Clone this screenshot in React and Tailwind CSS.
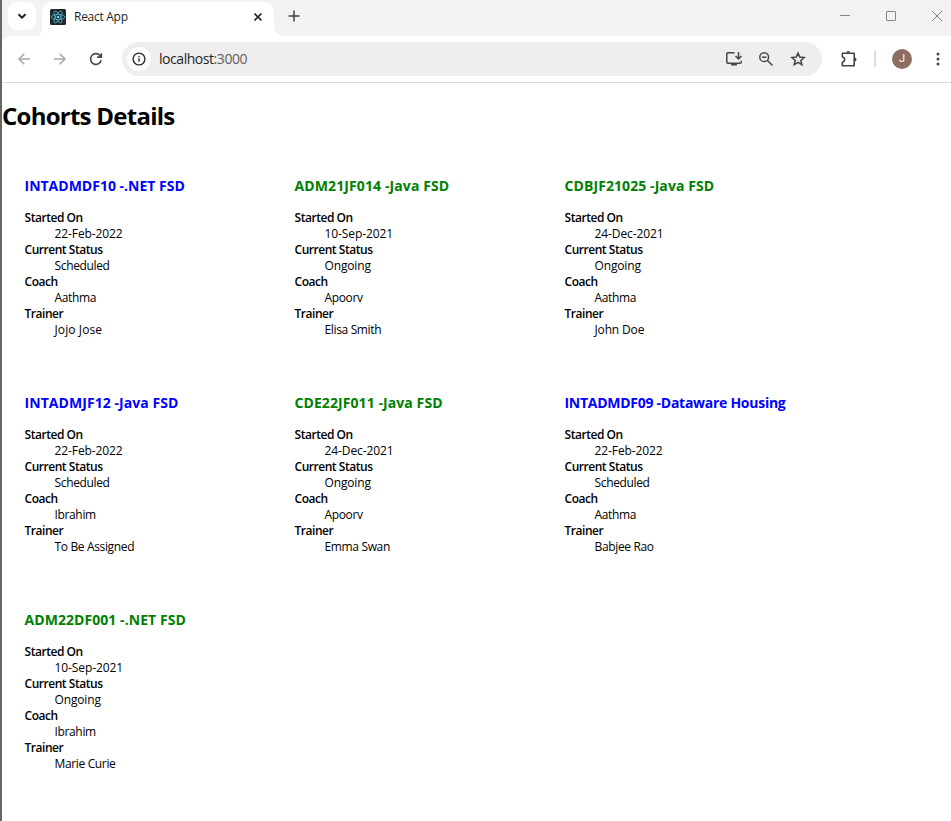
import React from "react";

const cohorts = [
  { name: "INTADMDF10 -.NET FSD", spacing: "tracking-[0px]", started: "22-Feb-2022", status: "Scheduled", coach: "Aathma", trainer: "Jojo Jose" },
  { name: "ADM21JF014 -Java FSD", spacing: "tracking-[0.11px]", started: "10-Sep-2021", status: "Ongoing", coach: "Apoorv", trainer: "Elisa Smith" },
  { name: "CDBJF21025 -Java FSD", spacing: "tracking-[0.08px]", started: "24-Dec-2021", status: "Ongoing", coach: "Aathma", trainer: "John Doe" },
  { name: "INTADMJF12 -Java FSD", spacing: "tracking-[0.06px]", started: "22-Feb-2022", status: "Scheduled", coach: "Ibrahim", trainer: "To Be Assigned" },
  { name: "CDE22JF011 -Java FSD", spacing: "tracking-[0.08px]", started: "24-Dec-2021", status: "Ongoing", coach: "Apoorv", trainer: "Emma Swan" },
  { name: "INTADMDF09 -Dataware Housing", spacing: "tracking-[-0.27px]", started: "22-Feb-2022", status: "Scheduled", coach: "Aathma", trainer: "Babjee Rao" },
  { name: "ADM22DF001 -.NET FSD", spacing: "tracking-[0.06px]", started: "10-Sep-2021", status: "Ongoing", coach: "Ibrahim", trainer: "Marie Curie" },
];

function Icon({ children, className = "", w = 16, h = 16, sw = 1.6 }) {
  return (
    <svg className={`shrink-0 ${className}`} width={w} height={h} viewBox={`0 0 ${w} ${h}`} fill="none" stroke="currentColor" strokeWidth={sw}>
      {children}
    </svg>
  );
}

function ReactLogo() {
  return (
    <svg className="ml-2 shrink-0" width="16" height="16" viewBox="0 0 16 16">
      <rect width="16" height="16" rx="1.5" fill="#222529" />
      <g fill="none" stroke="#53b5d0" strokeWidth="0.8">
        <ellipse cx="8" cy="8" rx="6.7" ry="2.6" />
        <ellipse cx="8" cy="8" rx="6.7" ry="2.6" transform="rotate(60 8 8)" />
        <ellipse cx="8" cy="8" rx="6.7" ry="2.6" transform="rotate(120 8 8)" />
      </g>
      <circle cx="8" cy="8" r="1.3" fill="#61dafb" />
    </svg>
  );
}

function TabStrip() {
  return (
    <div className="flex h-9 bg-[#f3f2f1]">
      <div className="mt-0.5 ml-1.5 flex h-7 w-7 items-center justify-center rounded-[9px] bg-white text-[#1f1f1f]">
        <Icon sw={2}><path d="M4.5 6.2 8 9.7l3.5-3.5" /></Icon>
      </div>
      <div className="flex w-1.5 items-end bg-white"><div className="h-full w-full rounded-br-[9px] bg-[#f3f2f1]" /></div>
      <div className="flex h-9 w-[232px] bg-[#f3f2f1] pt-0.5">
        <div className="flex h-[34px] w-full items-center rounded-t-[10px] bg-white pb-[5px]">
          <ReactLogo />
          <span className="ml-2 text-xs tracking-[-0.28px] text-[#1f1f1f]">React App</span>
          <Icon className="ml-auto mr-2 text-[#1f1f1f]" sw={1.7}><path d="m4.5 4.5 7 7m0-7-7 7" /></Icon>
        </div>
      </div>
      <div className="bg-white"><div className="h-full w-3 rounded-bl-[10px] bg-[#f3f2f1]" /></div>
      <div className="flex h-8 w-4 items-center text-[#444746]">
        <Icon sw={1.5}><path d="M8 2.5v11M2.5 8h11" /></Icon>
      </div>
      <div className="ml-auto flex h-8 items-center gap-[30px] pr-1.5 text-[#858585]">
        <Icon sw={1}><path d="M3 7.5h10" /></Icon>
        <Icon sw={1}><rect x="3.5" y="3.5" width="9" height="9" rx="0.5" /></Icon>
        <Icon sw={1}><path d="m3 3 10 10m0-10L3 13" /></Icon>
      </div>
    </div>
  );
}

function Toolbar() {
  return (
    <div className="bg-[#f3f2f1]">
      <div className="flex h-[47px] items-center rounded-tl-lg border-b border-[#dddddd] bg-white text-[#444746]">
        <Icon className="ml-3.5 text-[#a9a9a9]" sw={1.6}><path d="M14 8H3m5.3-5.3L3 8l5.3 5.3" /></Icon>
        <Icon className="ml-5 text-[#a9a9a9]" sw={1.6}><path d="M2 8h11M7.7 2.7 13 8l-5.3 5.3" /></Icon>
        <Icon className="ml-5" sw={1.6}><path d="M13.2 9.3A5.4 5.4 0 1 1 11.8 4.2L13 5.4M13.3 2.2v3.9H9.2" /></Icon>
        <div className="ml-[18px] flex h-[34px] w-[700px] items-center rounded-full bg-[#efedee]">
          <div className="ml-[5px] flex h-6 w-6 items-center justify-center rounded-full bg-white text-[#303030]">
            <Icon sw={1.4}><circle cx="8" cy="8" r="5.9" /><path d="M8 7.2v3.6M8 4.9v1.4" /></Icon>
          </div>
          <span className="ml-2 text-sm tracking-[-0.45px] text-[#1f1f1f]">localhost<span className="text-[#5f5f5f]">:3000</span></span>
          <div className="ml-auto flex items-center pr-4">
            <Icon className="mr-[15px]" w={18} sw={1.5}><path d="M9.5 1.8H3Q1.8 1.8 1.8 3v8q0 1.2 1.2 1.2h12q1.2 0 1.2-1.2V9.8" /><path d="M13.5 1v6.2M10.5 5l3 3 3-3" /><path d="M6 13.5h6" strokeWidth="2" /></Icon>
            <Icon className="mr-4" sw={1.5}><circle cx="6.2" cy="6.2" r="4.4" /><path d="M4 6.2h4.4M9.5 9.5l5 5" /></Icon>
            <Icon sw={1.5}><path d="m8 2.1 1.75 4 4.4.4-3.3 2.9 1 4.3L8 11.4l-3.8 2.3 1-4.3-3.3-2.9 4.4-.4Z" /></Icon>
          </div>
        </div>
        <Icon className="ml-[18px]" w={18} h={18} sw={1.6}>
          <path d="M2.3 3.3h11.9v12.4H2.3v-3.5q2.3-.5 2.3-2.7T2.3 6.8Z" strokeLinejoin="round" />
          <path d="M6.2 2.8a2 1.9 0 0 1 4 0ZM14.6 7.5a1.9 2 0 0 1 0 4Z" fill="currentColor" stroke="none" />
        </Icon>
        <div className="ml-4 h-4 w-0.5 bg-[#dddddd]" />
        <div className="ml-4 flex h-5 w-5 items-center justify-center rounded-full bg-[#8d6e63] font-[Roboto] text-[11px] text-white">J</div>
        <Icon className="ml-[18px] text-[#444746]"><g fill="currentColor" stroke="none"><circle cx="8" cy="3" r="1.5" /><circle cx="8" cy="8" r="1.5" /><circle cx="8" cy="13" r="1.5" /></g></Icon>
      </div>
    </div>
  );
}

function valueSpacing(value) {
  if (/^\d/.test(value)) return "tracking-[-0.1px]";
  if (value.startsWith("Jojo")) return "tracking-[0.1px]";
  if (value.startsWith("John") || value === "Ongoing") return "tracking-[-0.15px]";
  return "tracking-[-0.35px]";
}

function Cohort({ cohort }) {
  const color = cohort.status === "Ongoing" ? "text-[#008000]" : "text-[#0000ff]";
  const rows = [["Started On", cohort.started], ["Current Status", cohort.status], ["Coach", cohort.coach], ["Trainer", cohort.trainer]];
  return (
    <article className="h-[217px] w-[270px]">
      <h3 className={`mb-[15px] h-[19px] whitespace-nowrap text-[14px] leading-[19px] font-bold ${cohort.spacing} ${color}`}>{cohort.name}</h3>
      <dl className="text-xs leading-4 text-black">
        {rows.map(([label, value]) => (
          <React.Fragment key={label}>
            <dt className="font-semibold tracking-[-0.46px]">{label}</dt>
            <dd className={`ml-[30px] ${valueSpacing(value)}`}>{value}</dd>
          </React.Fragment>
        ))}
      </dl>
    </article>
  );
}

export default function App() {
  return (
    <div className="h-[821px] w-[951px] overflow-hidden border-l-2 border-[#666666] bg-white font-['Open_Sans','Noto_Sans',sans-serif]">
      <TabStrip />
      <Toolbar />
      <main>
        <h1 className="mt-[17px] h-8 text-2xl leading-8 font-bold tracking-[-0.75px] text-black">Cohorts Details</h1>
        <section className="mt-11 ml-[22.5px] grid w-[810px] grid-cols-3">
          {cohorts.map((cohort) => <Cohort key={cohort.name} cohort={cohort} />)}
        </section>
      </main>
    </div>
  );
}
